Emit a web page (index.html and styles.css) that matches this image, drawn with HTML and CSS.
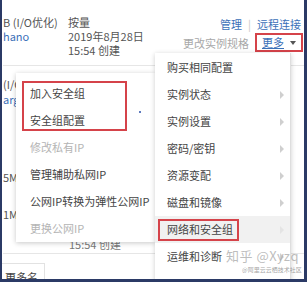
FILE: index.html
```html
<!DOCTYPE html>
<html lang="zh">
<head>
<meta charset="utf-8">
<link rel="stylesheet" href="styles.css">
</head>
<body>
<div class="frame">
  <div class="table">
    <div class="row r1">
      <div class="c1">
        <div class="line">B (I/O优化)</div>
        <div class="line link">hano</div>
      </div>
      <div class="c2">
        <div class="line">按量</div>
        <div class="line">2019年8月28日</div>
        <div class="line">15:54 创建</div>
      </div>
      <div class="c3">
        <div class="acts1"><span class="link">管理</span><span class="sep">|</span><span class="link">远程连接</span></div>
        <div class="acts2"><span class="muted">更改实例规格</span><span class="more"><span class="u">更多</span><span class="caret"></span></span></div>
      </div>
    </div>
    <div class="row r2">
      <div class="c1 wide">
        <div class="line2">(I/O优化)</div>
        <div class="line2 link">arge</div>
        <div class="line2 gap1">5Mbps</div>
        <div class="line2 gap2">1Mbps</div>
      </div>
      <div class="c2b">15:54 创建</div>
    </div>
    <div class="row r3">
      <div class="btn">更多名</div>
    </div>
  </div>

  <div class="submenu">
    <div class="item">加入安全组</div>
    <div class="item">安全组配置</div>
    <div class="item off">修改私有IP</div>
    <div class="item">管理辅助私网IP</div>
    <div class="item">公网IP转换为弹性公网IP</div>
    <div class="item off">更换公网IP</div>
  </div>

  <div class="mainmenu">
    <div class="item">购买相同配置</div>
    <div class="item">实例状态<span class="arr"></span></div>
    <div class="item">实例设置<span class="arr"></span></div>
    <div class="item">密码/密钥<span class="arr"></span></div>
    <div class="item">资源变配<span class="arr"></span></div>
    <div class="item">磁盘和镜像<span class="arr"></span></div>
    <div class="item hl">网络和安全组<span class="arr"></span></div>
    <div class="item">运维和诊断<span class="arr"></span></div>
  </div>

  <div class="mark mark-left"></div>
  <div class="mark mark-right"></div>
  <span class="dot"></span>

  <div class="wm">知乎 @Xyzq</div>
  <div class="wm-small">@阿里云云栖技术社区</div>
</div>
</body>
</html>
```

FILE: styles.css
```css
* { box-sizing: border-box; }
html, body { margin: 0; padding: 0; background: #ffffff; }
body {
  font-family: "Noto Sans CJK SC", "Noto Sans", sans-serif;
  font-size: 11px;
  color: #444;
}
.frame {
  position: relative;
  width: 307px;
  height: 282px;
  overflow: hidden;
  background: #ffffff;
  border-left: 2px solid #2b3a66;
  border-right: 3px solid #2b3a66;
  border-bottom: 3px solid #2b3a66;
}
.table { padding-left: 1px; }
.row { display: flex; border-bottom: 1px solid #e6e6e6; }
.r1 { height: 66px; padding-top: 15px; }
.r2 { height: 187px; padding-top: 11px; border-bottom: none; }
.r3 { border-top: 1px solid #e6e6e6; border-bottom: none; padding-top: 9px; }
.c1 { width: 65px; white-space: nowrap; }
.wide { width: 120px; }
.line { line-height: 14px; height: 14px; color: #555; }
.line2 { line-height: 15px; height: 15px; color: #555; }
.gap1 { margin-top: 63px; }
.gap2 { margin-top: 22px; }
.c2 { width: 110px; color: #555; }
.c2b { margin-left: -54px; margin-top: 160px; line-height: 14px; color: #777; }
.link { color: #3b70b8; }
.c3 {
  flex: 1;
  display: flex;
  flex-direction: column;
  align-items: flex-end;
  padding-right: 3px;
  margin-top: 2px;
}
.acts1 { line-height: 14px; display: flex; gap: 6px; }
.sep { color: #c8c8c8; }
.acts2 { margin-top: 2px; display: flex; align-items: center; gap: 6px; margin-right: -2px; }
.muted { color: #a8a8a8; }
.more {
  display: flex;
  align-items: center;
  gap: 6px;
  height: 19px;
  padding: 0 5px 0 5px;
  border: 2px solid #d5434a;
}
.more .u { color: #3b70b8; text-decoration: underline; line-height: 13px; }
.caret {
  width: 0; height: 0;
  border-left: 3px solid transparent;
  border-right: 3px solid transparent;
  border-top: 4px solid #555;
}
.btn {
  width: 43px;
  height: 20px;
  margin-left: -1px;
  border: 1px solid #e2e2e2;
  border-left: none;
  padding: 6px 0 0 3px;
  line-height: 14px;
  color: #444;
}

.submenu {
  position: absolute;
  left: 14px;
  top: 73px;
  width: 139px;
  height: 169px;
  padding-top: 7px;
  background: #ffffff;
  box-shadow: 0 1px 5px rgba(0, 0, 0, 0.22);
}
.submenu .item { padding-left: 14px; }
.item {
  height: 27px;
  line-height: 27px;
  white-space: nowrap;
  color: #444;
}
.item.off { color: #b4b4b4; }

.mainmenu {
  position: absolute;
  left: 153px;
  top: 53px;
  width: 136px;
  height: 240px;
  padding-top: 1px;
  background: #ffffff;
  border-right: 1px solid #dedede;
  box-shadow: 0 1px 5px rgba(0, 0, 0, 0.2);
}
.mainmenu .item {
  display: flex;
  align-items: center;
  justify-content: space-between;
  padding: 0 6px 0 12px;
}
.mainmenu .item.hl { background: #f1f1f1; }
.arr {
  width: 0; height: 0;
  border-top: 4px solid transparent;
  border-bottom: 4px solid transparent;
  border-left: 4px solid #cfcfcf;
}
.hl .arr { border-left-color: #e4e4e4; }

.mark {
  position: absolute;
  border: 2px solid #d5434a;
}
.mark-left { left: 20px; top: 81px; width: 105px; height: 50px; }
.mark-right { left: 156px; top: 219px; width: 81px; height: 22px; }
.dot {
  position: absolute;
  left: 137px; top: 111px;
  width: 2px; height: 2px;
  background: #2a4fa8;
  border-radius: 1px;
}
.wm {
  position: absolute;
  left: 224px;
  top: 248px;
  font-size: 13px;
  line-height: 16px;
  color: rgba(160, 160, 160, 0.7);
  white-space: nowrap;
  letter-spacing: 0.5px;
}
.wm-small {
  position: absolute;
  left: 240px;
  top: 266px;
  font-size: 6px;
  line-height: 7px;
  color: rgba(140, 140, 140, 0.8);
  white-space: nowrap;
}
```
